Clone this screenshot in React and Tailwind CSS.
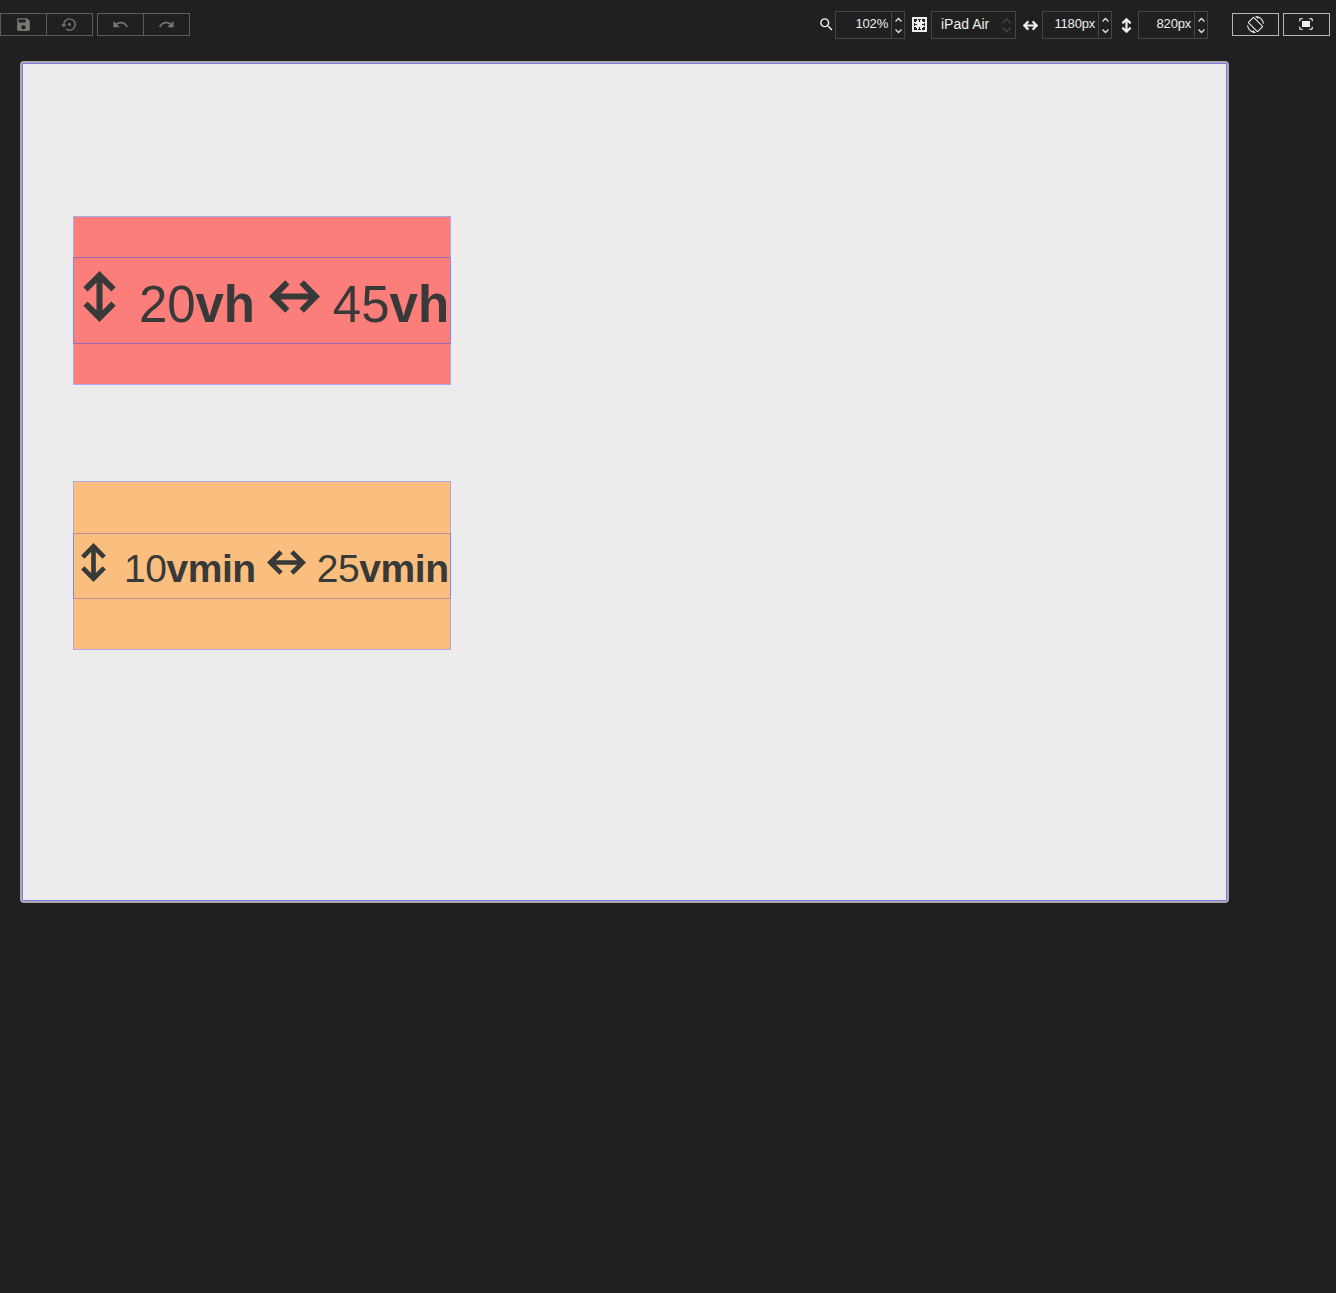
import React from "react";
import { MdSave, MdSettingsBackupRestore, MdUndo, MdRedo, MdSearch, MdScreenRotation } from "react-icons/md";

function Arrow({ horizontal = false, bold = false, className = "" }) {
  return (
    <svg viewBox="0 0 52 52" className={"shrink-0 " + className} fill="none" stroke="currentColor" strokeWidth={bold ? 7.6 : 6.2}>
      <g transform={horizontal ? "rotate(90 26 26)" : undefined}>
        <path d="M11.7 18.7 26 4.4l14.3 14.3M11.7 33.3 26 47.6l14.3-14.3M26 6v40" />
      </g>
    </svg>
  );
}

function Stepper({ dim = false }) {
  return (
    <svg viewBox="0 0 12 26" className={dim ? "h-[26px] w-3 text-[#454545]" : "h-[26px] w-3 text-[#e4e4e4]"} fill="none" stroke="currentColor" strokeWidth="1.3">
      <path d={dim ? "M2.5 11 6.5 7l4 4M2.5 15.5l4 4 4-4" : "M3.5 9.5l3-3 3 3M3.5 17.5l3 3 3-3"} />
    </svg>
  );
}

function NumberField({ value, className }) {
  return (
    <div className={"flex h-7 border border-[#454545] " + className}>
      <div className="flex-1 pr-[3px] text-right text-[13px] leading-6 tracking-[-0.2px]">{value}</div>
      <div className="w-[13px] border-l border-[#454545]"><Stepper /></div>
    </div>
  );
}

function ToolPair({ icons }) {
  return (
    <div className="flex h-[23px] w-[93px] border border-[#5c5c5c] text-[#7a7672]">
      <div className="flex w-[45px] items-center justify-center">{icons[0]}</div>
      <div className="flex w-[46px] items-center justify-center border-l border-[#5c5c5c]">{icons[1]}</div>
    </div>
  );
}

function Toolbar() {
  return (
    <header className="flex h-[61px] items-start text-[#eeeeee]">
      <div className="mt-[13px] flex gap-1">
        <ToolPair icons={[<MdSave key="s" size={17} />, <MdSettingsBackupRestore key="r" size={17} className="-ml-px" />]} />
        <ToolPair icons={[<MdUndo key="u" size={17} />, <MdRedo key="r" size={17} />]} />
      </div>
      <div className="mt-[11px] ml-[628px] flex items-center">
        <MdSearch size={17} className="-mt-0.5 w-[17px]" />
        <NumberField value="102%" className="w-[70px]" />
        <svg viewBox="0 0 15 15" className="-mt-px ml-[7px] h-[15px] w-[15px]" shapeRendering="crispEdges">
          <path fill="#eeeeee" d="M0 0h15v15H0z" />
          <path fill="#202020" d="M2 2h3v2H4v1H2zM10 2h3v3h-2V4h-1zM2 10h2v1h1v2H2zM11 10h2v3h-3v-2h1zM6 2h3v1H8v2H7V3H6zM7 10h1v2h1v1H6v-1h1zM2 6h1v1h2v1H3v1H2zM12 6h1v3h-1V8h-2V7h2z" />
        </svg>
        <div className="ml-1 flex h-7 w-[85px] items-center border border-[#454545] pl-[9px]">
          <span className="flex-1 pb-0.5 text-[14px] leading-6">iPad Air</span>
          <div className="mr-[3px]"><Stepper dim /></div>
        </div>
        <Arrow horizontal bold className="ml-[7px] h-[15px] w-[15px]" />
        <NumberField value="1180px" className="ml-1 w-[70px]" />
        <Arrow bold className="ml-[7px] h-[15px] w-[15px]" />
        <NumberField value="820px" className="ml-1 w-[70px]" />
      </div>
      <div className="mt-[13px] ml-6 flex gap-1">
        <div className="flex h-[23px] w-[47px] items-center justify-center border border-[#b5b5b5]"><MdScreenRotation size={17} /></div>
        <div className="flex h-[23px] w-[47px] items-center justify-center border border-[#b5b5b5]">
          <svg viewBox="0 0 14 12" className="-mt-px -ml-px h-3 w-[14px]" fill="none" stroke="currentColor" strokeWidth="1.2">
            <path d="M.7 3.2V2Q.7.7 2 .7h1.5M10.5.7H12q1.3 0 1.3 1.3v1.2M13.3 8.8V10q0 1.3-1.3 1.3h-1.5M3.5 11.3H2Q.7 11.3.7 10V8.8" />
            <path fill="currentColor" stroke="none" d="M3 3h8v6H3z" />
          </svg>
        </div>
      </div>
    </header>
  );
}

export default function App() {
  return (
    <div className="h-[1293px] w-[1336px] overflow-hidden bg-[#202020] font-['Liberation_Sans',Arial,sans-serif]">
      <Toolbar />
      <main className="ml-5 h-[842px] w-[1209px] rounded-[4px] border-2 border-[#aaaaaa]">
        <div className="h-full w-full border border-[#7d7def] bg-[#ececec] pt-[152px] pl-[50px] text-[#383a39]">
          <section className="flex h-[169px] w-[378px] items-center border border-[#aaaaf0] bg-[#fb7e7b]">
            <div className="-mx-px flex h-[87px] w-[378px] shrink-0 border border-[#9b6cb8] border-x-[#8585ef]">
              <Arrow className="mt-[13px] h-[51px] w-[51px]" />
              <span className="ml-[14px] text-[51px] leading-[94px] tracking-[-0.1px]">20<b>vh</b></span>
              <Arrow horizontal className="ml-[14px] mt-[13px] h-[51px] w-[51px]" />
              <span className="ml-[13px] text-[51px] leading-[94px]">45<b>vh</b></span>
            </div>
          </section>
          <section className="mt-[96px] flex h-[169px] w-[378px] items-center border border-[#b0a5df] bg-[#fabf7e]">
            <div className="-mx-px flex h-[66px] w-[378px] shrink-0 border border-[#b98fa2] border-x-[#8585ef]">
              <Arrow className="mt-[9px] h-[39px] w-[39px]" />
              <span className="ml-[11px] text-[39px] leading-[70px] tracking-[-0.4px]">10<b className="tracking-[-0.5px]">vmin</b></span>
              <Arrow horizontal className="ml-[11px] mt-[9px] h-[39px] w-[39px]" />
              <span className="ml-[11px] text-[39px] leading-[70px] tracking-[-0.4px]">25<b className="tracking-[-0.4px]">vmin</b></span>
            </div>
          </section>
        </div>
      </main>
    </div>
  );
}
